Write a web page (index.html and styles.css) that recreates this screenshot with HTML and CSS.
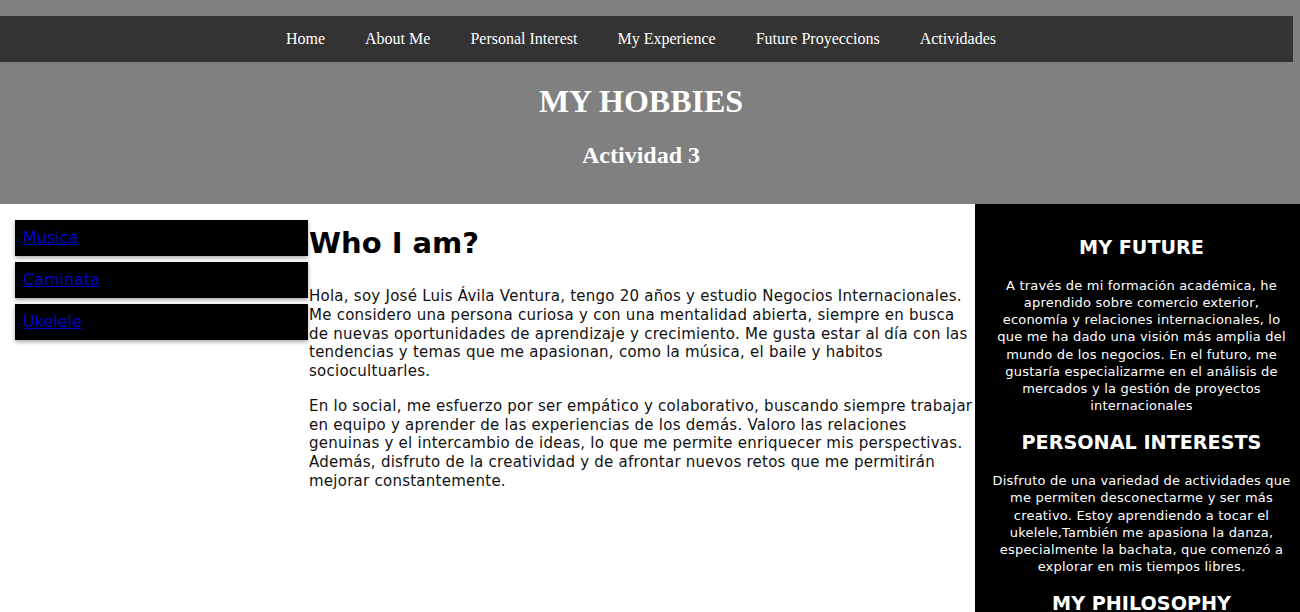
FILE: index.html
```html
<!DOCTYPE html>
<html lang="es">
<head>
<meta charset="utf-8">
<title>My Hobbies</title>
<link rel="stylesheet" href="styles.css">
</head>
<body>
<header class="site-header">
  <nav class="topnav">
    <a href="#">Home</a>
    <a href="#">About Me</a>
    <a href="#">Personal Interest</a>
    <a href="#">My Experience</a>
    <a href="#">Future Proyeccions</a>
    <a href="#">Actividades</a>
  </nav>
  <h1 class="site-title">MY HOBBIES</h1>
  <h2 class="site-subtitle">Actividad 3</h2>
</header>
<div class="layout">
  <aside class="left">
    <div class="left-item"><a href="#">Musica</a></div>
    <div class="left-item"><a href="#">Caminata</a></div>
    <div class="left-item"><a href="#">Ukelele</a></div>
  </aside>
  <main class="content">
    <h2 class="content-title">Who I am?</h2>
    <p>Hola, soy José Luis Ávila Ventura, tengo 20 años y estudio Negocios Internacionales. Me considero una persona curiosa y con una mentalidad abierta, siempre en busca de nuevas oportunidades de aprendizaje y crecimiento. Me gusta estar al día con las tendencias y temas que me apasionan, como la música, el baile y habitos sociocultuarles.</p>
    <p>En lo social, me esfuerzo por ser empático y colaborativo, buscando siempre trabajar en equipo y aprender de las experiencias de los demás. Valoro las relaciones genuinas y el intercambio de ideas, lo que me permite enriquecer mis perspectivas. Además, disfruto de la creatividad y de afrontar nuevos retos que me permitirán mejorar constantemente.</p>
  </main>
  <aside class="right">
    <h3>MY FUTURE</h3>
    <p>A través de mi formación académica, he aprendido sobre comercio exterior, economía y relaciones internacionales, lo que me ha dado una visión más amplia del mundo de los negocios. En el futuro, me gustaría especializarme en el análisis de mercados y la gestión de proyectos internacionales</p>
    <h3>PERSONAL INTERESTS</h3>
    <p>Disfruto de una variedad de actividades que me permiten desconectarme y ser más creativo. Estoy aprendiendo a tocar el ukelele,También me apasiona la danza, especialmente la bachata, que comenzó a explorar en mis tiempos libres.</p>
    <h3>MY PHILOSOPHY</h3>
    <p>Creo que cada día es una oportunidad para aprender algo nuevo y crecer como persona.</p>
  </aside>
</div>
</body>
</html>
```
FILE: styles.css
```css
html, body {
  margin: 0;
  padding: 0;
}
body {
  background: #ffffff;
  font-family: "DejaVu Sans", Verdana, sans-serif;
  overflow: hidden;
  height: 612px;
}
.site-header {
  background: #808080;
  padding-top: 16px;
  height: 188px;
  text-align: center;
  font-family: "Liberation Serif", "Times New Roman", serif;
  color: #ffffff;
}
.topnav {
  background: #333333;
  height: 46px;
  margin-right: 7px;
  padding-right: 11px;
  display: flex;
  justify-content: center;
  align-items: center;
}
.topnav a {
  color: #ffffff;
  text-decoration: none;
  font-size: 16px;
  padding: 0 20px;
}
.site-title {
  font-size: 32px;
  margin: 21px 18px 0 0;
  line-height: 37px;
}
.site-subtitle {
  font-size: 24px;
  margin: 21px 18px 0 0;
  line-height: 28px;
}
.layout {
  display: flex;
  height: 408px;
}
.left {
  width: 293px;
  padding: 16px 0 0 15px;
  display: flex;
  flex-direction: column;
  gap: 6px;
  flex: none;
}
.left-item {
  background: #000000;
  height: 36px;
  box-sizing: border-box;
  padding: 8px 8px;
  box-shadow: 0 2px 4px rgba(0,0,0,0.35);
  font-size: 16px;
  line-height: 20px;
}
.left-item a {
  color: #0000cc;
}
.content {
  flex: 1;
  padding: 0 2px 0 1px;
  color: #111111;
  font-size: 15px;
  letter-spacing: 0.25px;
  line-height: 18.75px;
}
.content-title {
  font-size: 29px;
  letter-spacing: 0;
  line-height: 34px;
  margin: 22px 0 27px;
  color: #000000;
}
.content p {
  margin: 0 0 16px;
}
.right {
  width: 325px;
  flex: none;
  background: #000000;
  color: #ffffff;
  text-align: center;
  padding: 15px 8px 0 16px;
  box-sizing: border-box;
  font-size: 13px;
  letter-spacing: 0.2px;
  line-height: 17.15px;
}
.right h3 {
  font-size: 19.2px;
  letter-spacing: 0;
  line-height: 24px;
  margin: 17px 0 17px;
}
.right p {
  margin: 0;
}
```
